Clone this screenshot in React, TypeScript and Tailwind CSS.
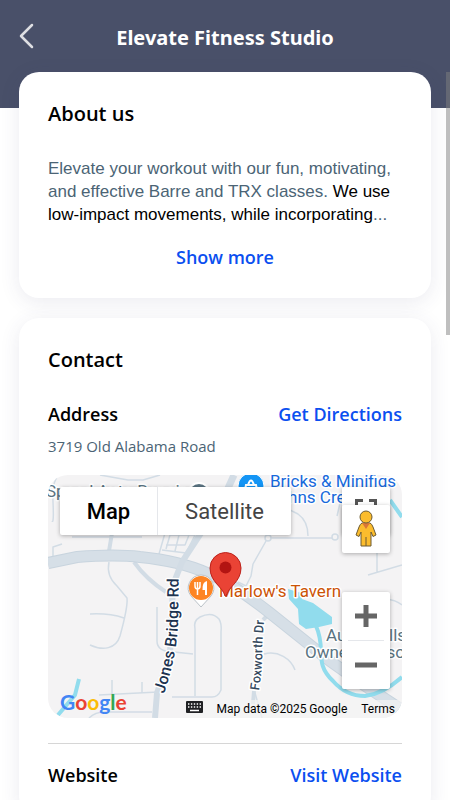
import type { ReactNode } from "react";

const heading = "font-['Open_Sans',sans-serif] font-semibold text-black";
const action =
  "font-['Open_Sans',sans-serif] text-[18px] leading-6 font-semibold text-[#0b4ff0]";

function Card({ title, children }: { title: string; children: ReactNode }) {
  return (
    <section className="rounded-[20px] bg-white px-[29px] pt-7 pb-[29px] shadow-[0_4px_20px_rgba(60,60,110,0.10)]">
      <h2 className={`${heading} text-[20px] leading-7`}>{title}</h2>
      {children}
    </section>
  );
}

function StreetMap() {
  return (
    <svg
      viewBox="0 0 354 243"
      preserveAspectRatio="xMidYMid slice"
      className="block h-[243px] w-full"
      role="img"
      aria-label="Map of 3719 Old Alabama Road"
    >
      <defs>
        <path id="jones-bridge" d="M116 219Q129 180 130 150L131 80" />
        <path id="foxworth" d="M211 216Q215 190 214 172L218 120" />
      </defs>
      <rect width="354" height="243" fill="#f4f3f4" />
      <g fill="none" stroke="#d2dce5" strokeWidth="1.5" strokeLinejoin="round">
        <path d="M11 0Q4 5 5 27T4 46M52 0L80 5H95L112 0M24 62H94M5 81V72L14 69" />
        <path d="M111 79L117 58M118 74L122 60H147L138 78L114 75M118 70H137L141 60M131 60L127 76" />
        <path d="M61 87Q58 101 69 111L79 123Q80 132 72 161C68 174 55 176 42 170M42 139Q61 138 76 143" />
        <path d="M109 132V166Q109 177 126 177L145 179M147 221V154Q145 146 152 142Q164 136 171 144Q174 149 173 157V215Q170 222 164 222H124" />
        <path d="M51 220L110 217M64 219V205M94 218V207M41 243Q47 237 57 237H104" />
        <path d="M223 63H284M218 66L205 89L203 101L198 111L190 107M234 31L250 39Q260 46 260 61M292 28L289 41M320 100L354 90M329 78V97M216 179C230 175 243 184 247 195M207 218L214 243M333 125Q345 123 354 130M244 235L254 228" />
        <circle cx="220" cy="63" r="3" />
        <circle cx="287" cy="62" r="3" />
      </g>
      <g fill="none" stroke="#d2dce5" strokeWidth="4">
        <path d="M64 58L60 82M86 87Q98 104 118 117M222 138L215 145M206 216L205 229" />
        <path d="M176 22L186 0" strokeWidth="7" />
      </g>
      <path d="M0 88L29 82Q68 79 92 82Q132 86 159 98Q187 110 222 138L282 186L316 210L354 235" fill="none" stroke="#c8d4de" strokeWidth="12" />
      <path d="M0 88L29 82Q68 79 92 82Q132 86 159 98Q187 110 222 138L282 186L316 210L354 235" fill="none" stroke="#d6dfe7" strokeWidth="10" />
      <path d="M155 55L134 87L125 110L122 180L109 218L107 243" fill="none" stroke="#d2dce5" strokeWidth="6" />
      <path d="M240 114L253 118L254 124L265 128L284 142V149L271 152L258 154L251 149L250 134L241 124Z" fill="#91dced" />
      <path d="M268 151C279 175 265 187 285 206Q298 221 317 221Q335 219 354 202M342 25L354 42M31 204L27 220L10 240" fill="none" stroke="#91dced" strokeWidth="4" />

      <g className="font-['Roboto',sans-serif]" stroke="#fff" strokeWidth="3" strokeLinejoin="round" paintOrder="stroke">
        <text x="-2" y="22" fontSize="17" fill="#5a7381">Speed Auto Repair</text>
        <text x="222" y="12" fontSize="17" fill="#1769db">Bricks &amp; Minifigs</text>
        <text x="221" y="28" fontSize="17" fill="#1769db">Johns Creek</text>
        <text x="171" y="122" fontSize="17" fill="#cc5306">Marlow&apos;s Tavern</text>
        <text x="278" y="166" fontSize="17" fill="#5a7381">Autry Mills</text>
        <text x="257" y="183" fontSize="17" fill="#5a7381">Owners Association</text>
        <text fontSize="16" fontWeight="500" fill="#1d3350">
          <textPath href="#jones-bridge">Jones Bridge Rd</textPath>
        </text>
        <text fontSize="13" fontWeight="500" fill="#35495e">
          <textPath href="#foxworth">Foxworth Dr</textPath>
        </text>
      </g>

      <circle cx="151" cy="19" r="11" fill="#5a7381" stroke="#fff" strokeWidth="2" />
      <circle cx="203" cy="11" r="13" fill="#1495f5" stroke="#fff" strokeWidth="1" />
      <path d="M198 10H208L210 19H196ZM200 10Q203 1 206 10" fill="none" stroke="#fff" strokeWidth="2" />

      <path d="M153 100A13 13 0 0 1 163 121L153 132L143 121A13 13 0 0 1 153 100Z" fill="#fff" stroke="#bbc2c8" />
      <circle cx="153" cy="113" r="12" fill="#fd8423" />
      <path d="M147 107V111Q147 114 149.500 114Q152 114 152 111V107M149.500 107V120" fill="none" stroke="#fff" strokeWidth="1.5" />
      <path d="M159 106V120H157V115H154.500Q154 107 159 106Z" fill="#fff" />
      <path d="M177 121C175 112 162 107 162 93A15.500 15.500 0 0 1 193 93C193 107 180 112 178 121Z" fill="#ea4335" stroke="#bd221b" />
      <circle cx="177.500" cy="92.500" r="6" fill="#b31412" />
    </svg>
  );
}

function Pegman() {
  return (
    <svg viewBox="0 0 24 38" className="h-[38px] w-6" aria-hidden="true">
      <path d="M8 13H16Q18 14 19 17L22 25L19 26.500L17 22V36H7V22L5 26.500L2 25L5 17Q6 14 8 13Z" fill="#fbbc2d" stroke="#6d5b32" strokeLinejoin="round" />
      <path d="M12 27V36" stroke="#6d5b32" />
      <path d="M8 13H16L12 19Z" fill="#d97737" />
      <circle cx="12" cy="7" r="6" fill="#fbbc2d" stroke="#6d5b32" />
    </svg>
  );
}

function KeyboardIcon() {
  return (
    <svg viewBox="0 0 17 12" className="h-3 w-[17px]" aria-hidden="true">
      <rect width="17" height="12" rx="1" fill="#202124" />
      <path d="M2 3H15M2 6H15" stroke="#fff" strokeWidth="1.5" strokeDasharray="1.4 1.5" />
      <path d="M4 9.500H13" stroke="#fff" strokeWidth="1.5" />
    </svg>
  );
}

function MapPanel() {
  return (
    <div className="relative mt-[17px] overflow-hidden rounded-[20px] font-['Roboto',sans-serif]">
      <StreetMap />
      <div className="absolute top-3 left-3 flex rounded-xs bg-white shadow-[0_1px_4px_rgba(0,0,0,0.3)]">
        <button type="button" className="h-12 w-[98px] border-r border-gray-200 text-[22px] font-medium text-black">Map</button>
        <button type="button" className="h-12 w-[133px] text-[22px] text-[#444]">Satellite</button>
      </div>
      <button type="button" aria-label="Toggle fullscreen view" className="absolute top-3 right-3 flex h-12 w-12 justify-center rounded-xs bg-white pt-3 shadow-[0_1px_4px_rgba(0,0,0,0.3)]">
        <svg viewBox="0 0 22 22" className="h-[22px] w-[22px]" fill="none" stroke="#555" strokeWidth="3" aria-hidden="true">
          <path d="M1.500 8V1.500H8M14 1.500H20.500V8M20.500 14V20.500H14M8 20.500H1.500V14" />
        </svg>
      </button>
      <button type="button" aria-label="Street View" className="absolute top-[30px] right-3 flex h-12 w-12 items-center justify-center rounded-xs bg-white shadow-[0_1px_4px_rgba(0,0,0,0.3)]">
        <Pegman />
      </button>
      <div className="absolute top-[117px] right-3 w-12 rounded-xs bg-white shadow-[0_1px_4px_rgba(0,0,0,0.3)]">
        <button type="button" aria-label="Zoom in" className="flex h-12 w-12 items-center justify-center">
          <svg viewBox="0 0 22 22" className="h-[22px] w-[22px]" stroke="#666" strokeWidth="5" aria-hidden="true"><path d="M0 11H22M11 0V22" /></svg>
        </button>
        <div className="mx-1.5 h-px bg-gray-200" />
        <button type="button" aria-label="Zoom out" className="flex h-12 w-12 items-center justify-center">
          <svg viewBox="0 0 22 22" className="h-[22px] w-[22px]" stroke="#666" strokeWidth="5" aria-hidden="true"><path d="M0 11H22" /></svg>
        </button>
      </div>
      <div className="absolute right-0 bottom-0 flex h-[18px] items-center bg-[#f4f3f4]/70 pr-[7px] text-[12px] leading-4 text-black">
        <button type="button" aria-label="Keyboard shortcuts" className="mr-[14px] pb-1"><KeyboardIcon /></button>
        <span className="mr-[14px]">Map data ©2025 Google</span>
        <a href="#terms">Terms</a>
      </div>
      <a href="#google" className="absolute bottom-0 left-3 font-['Lato',sans-serif] text-[21px] leading-8 font-bold text-[#4285f4]">
        G<span className="text-[#ea4335]">o</span><span className="text-[#fbbc05]">o</span>g<span className="text-[#34a853]">l</span><span className="text-[#ea4335]">e</span>
      </a>
    </div>
  );
}

export default function App() {
  return (
    <div className="relative h-screen overflow-hidden bg-white">
      <header className="flex h-[108px] items-start bg-[#495069] px-[19px] pt-5">
        <button type="button" aria-label="Back" className="flex h-8 w-8 items-center">
          <svg viewBox="0 0 16 26" className="h-[26px] w-4" fill="none" stroke="#dedfe3" strokeWidth="2.500" strokeLinecap="round" strokeLinejoin="round" aria-hidden="true">
            <path d="M13 2L2 13L13 24" />
          </svg>
        </button>
        <h1 className="flex-1 pt-0.5 text-center font-['Noto_Sans',sans-serif] text-[20px] leading-8 font-bold text-white">Elevate Fitness Studio</h1>
        <div className="w-8" />
      </header>
      <main className="relative -mt-9 flex flex-col gap-5 px-[19px]">
        <Card title="About us">
          <p className="mt-[29px] font-['Liberation_Sans',sans-serif] text-[17px] leading-[23px] text-[#4b6475]">
            Elevate your workout with our fun, motivating, and effective Barre and TRX classes. <span className="text-black">We use low-impact movements, while incorporating</span>...
          </p>
          <button type="button" className={`${action} mx-auto mt-[19px] block`}>Show more</button>
        </Card>
        <Card title="Contact">
          <div className="mt-7 flex items-center justify-between">
            <h3 className={`${heading} text-[18px] leading-6`}>Address</h3>
            <a href="#directions" className={action}>Get Directions</a>
          </div>
          <p className="mt-2 font-['Open_Sans',sans-serif] text-[15px] leading-6 text-[#4b6475]">3719 Old Alabama Road</p>
          <MapPanel />
          <div className="mt-[25px] flex items-center justify-between border-t border-[#d6d6d6] pt-[19px]">
            <h3 className={`${heading} text-[18px] leading-6`}>Website</h3>
            <a href="#website" className={action}>Visit Website</a>
          </div>
        </Card>
      </main>
      <div className="absolute top-[72px] right-0 h-[263px] w-1 bg-[#808080]/50" />
    </div>
  );
}
